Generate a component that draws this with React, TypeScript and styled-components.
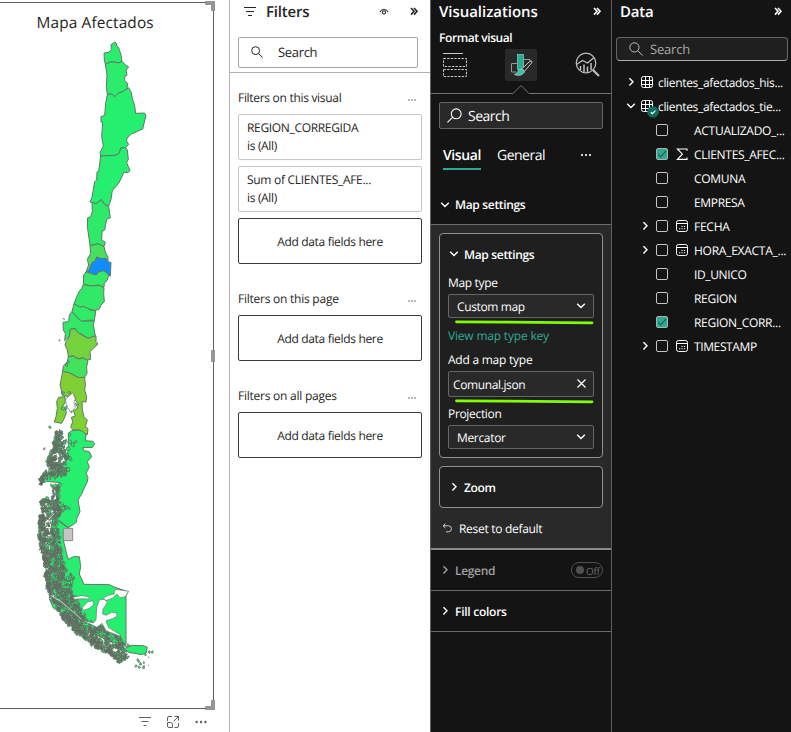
import React from "react";
import styled, { createGlobalStyle } from "styled-components";

const GlobalStyle = createGlobalStyle`
  * { box-sizing: border-box; }
  body {
    margin: 0;
    background: #fff;
    font-family: "Open Sans", "Noto Sans", sans-serif;
    font-size: 12px;
    text-rendering: geometricPrecision;
    overflow: hidden;
  }
  svg { display: block; flex: none; }
`;

/* ---------- shared ---------- */

const Page = styled.div`
  display: grid;
  grid-template-columns: 229px 201px 182px 179px;
  width: 791px;
  height: 732px;
`;

const Label = styled.span<{
  $size?: number;
  $weight?: number;
  $spacing?: number;
  $color?: string;
  $drop?: number;
}>`
  padding-top: ${(p) => (p.$drop ?? 0) * 2}px;
  font-size: ${(p) => p.$size ?? 12}px;
  font-weight: ${(p) => p.$weight ?? 400};
  letter-spacing: ${(p) => p.$spacing ?? -0.33}px;
  color: ${(p) => p.$color ?? "inherit"};
  line-height: 18px;
  white-space: nowrap;
`;

const PaneHeader = styled.header<{ $pad: string }>`
  display: flex;
  align-items: center;
  justify-content: space-between;
  height: 24px;
  padding: ${(p) => p.$pad};
`;

const HeaderGroup = styled.div<{ $gap: number }>`
  display: flex;
  align-items: center;
  gap: ${(p) => p.$gap}px;
`;

const Chevron = ({ dir, color = "#fff" }: { dir: "right" | "down"; color?: string }) => (
  <svg width="10" height="10" viewBox="0 0 10 10" fill="none" stroke={color} strokeWidth="1.4">
    <path d={dir === "right" ? "M3.4 1.2 L7 4.8 L3.4 8.4" : "M1.2 2.8 L5 6.6 L8.8 2.8"} />
  </svg>
);

const DoubleChevron = ({ color }: { color: string }) => (
  <svg width="9" height="10" viewBox="0 0 9 10" fill="none" stroke={color} strokeWidth="1.6">
    <path d="M1 1 L4 4.3 L1 7.6 M4 1 L7 4.3 L4 7.6" />
  </svg>
);

const Magnifier = ({ size, color, flip, weight = 1.15 }: { size: number; color: string; flip?: boolean; weight?: number }) => (
  <svg width={size} height={size} viewBox="0 0 14 14" fill="none" stroke={color} strokeWidth={weight}>
    <g transform={flip ? "translate(14 0) scale(-1 1)" : undefined}>
      <circle cx="5.4" cy="5.4" r="4.6" />
      <path d="M8.8 8.8 L13.6 13.4" />
    </g>
  </svg>
);

const Dots = ({ color, gap = 3.5, r = 0.8 }: { color: string; gap?: number; r?: number }) => (
  <svg width="12" height="4" viewBox="0 0 12 4" fill={color}>
    {[-1, 0, 1].map((i) => (
      <circle key={i} cx={6 + i * gap} cy="2" r={r} />
    ))}
  </svg>
);

/* ---------- map visual ---------- */

const Canvas = styled.section`
  display: flex;
  flex-direction: column;
  height: 732px;
`;

const VisualFrame = styled.div`
  position: relative;
  width: 214px;
  height: 707px;
  margin-top: 2px;
  border: solid #605e5c;
  border-width: 1px 1px 1px 0;
`;

const VisualTitle = styled.h2`
  position: absolute;
  top: 10px;
  left: 36.5px;
  margin: 0;
  font-size: 15.4px;
  font-weight: 400;
  line-height: 20px;
  letter-spacing: 0.14px;
  color: #252423;
  white-space: nowrap;
`;

const Handle = styled.i<{ $at: "top" | "middle" | "bottom" }>`
  position: absolute;
  right: -2px;
  width: ${(p) => (p.$at === "middle" ? 4 : 10)}px;
  height: ${(p) => (p.$at === "middle" ? 12 : 10)}px;
  ${(p) => p.$at === "top" && "top: -2px; border-top: 4px solid #979695; border-right: 4px solid #979695;"}
  ${(p) => p.$at === "bottom" && "bottom: -2px; border-bottom: 4px solid #979695; border-right: 4px solid #979695;"}
  ${(p) => p.$at === "middle" && "top: 347px; background: #979695;"}
`;

const VisualActions = styled.div`
  display: flex;
  align-items: center;
  height: 23px;
  padding: 3px 0 0 138px;
  gap: 15px;
`;

const GREEN = "#26ef70";
const LAGOS = "#80d035";

const north: [string, string][] = [
  ["345,126 349,130 350,138 356,143 359,152 363,165 366,184 355,189 345,186 331,186 316,193 313,180 312,159 326,157 334,149 333,134", "#2bed6f"],
  ["316,193 331,186 345,186 355,189 366,184 376,194 386,201 378,210 381,226 374,230 374,242 383,250 381,266 370,274 352,281 344,290 336,282 322,283 319,262 321,225", "#2bec6c"],
  ["322,283 336,282 344,290 352,281 370,274 386,263 394,278 397,295 404,318 407,340 433,339 438,346 428,387 394,402 381,414 380,424 386,433 377,443 362,444 358,460 345,466 302,468 300,458 310,438 305,410 308,368 303,366 303,350 314,346 317,310", GREEN],
  ["302,468 345,466 358,460 362,444 377,443 382,450 385,478 380,488 390,512 384,518 372,516 366,530 356,550 337,572 333,598 326,618 313,612 304,599 288,611 270,606 276,592 284,545 290,540 291,516 296,514", GREEN],
  ["276,607 288,611 304,599 313,612 326,620 331,653 320,658 314,690 306,695 305,720 316,727 312,740 294,731 270,737 267,715 262,680 263,653 272,650 277,635", "#2dea68"],
  ["270,737 294,731 312,740 316,756 324,772 324,785 302,776 290,771 286,783 276,788 268,812 258,816 266,795 262,778 272,760", "#47df5c"],
  ["290,771 302,776 318,775 325,786 333,787 331,829 320,818 310,812 296,816 288,825 272,819 260,816 268,808 276,788 286,784", "#118dff"],
  ["258,816 272,820 288,825 296,816 310,812 320,818 326,826 322,840 313,850 312,862 295,855 275,858 250,854 251,825", "#35e867"],
  ["250,854 275,858 298,856 312,864 311,880 313,905 303,915 297,928 284,932 265,926 240,922 222,911 230,890 237,875 245,865", "#32e867"],
  ["222,911 240,922 248,919 262,924 270,930 287,932 285,950 283,961 262,961 245,964 230,950 216,935", "#30ea68"],
  ["216,935 230,952 245,964 283,962 280,975 286,1008 265,1015 245,1002 230,998 226,985 211,988 208,1008 194,1022 196,1000 190,990 189,967 206,965 208,945", "#32e967"],
  ["211,988 222,986 240,1002 264,1015 278,1010 288,1008 288,1025 294,1032 280,1045 270,1055 272,1078 262,1080 248,1074 235,1076 220,1068 205,1070 202,1050 195,1035 198,1025 208,1010", "#74d23f"],
  ["205,1070 220,1068 235,1077 250,1074 264,1082 260,1100 261,1120 254,1132 235,1133 220,1124 205,1118 188,1114 190,1098 202,1085", "#43e25c"],
  ["188,1114 206,1118 220,1125 235,1133 254,1132 256,1155 254,1170 260,1190 258,1206 246,1205 247,1230 252,1250 262,1260 256,1280 264,1286 262,1304 250,1300 240,1290 220,1290 212,1282 218,1265 214,1252 226,1248 220,1232 232,1225 236,1210 226,1202 225,1190 214,1180 205,1190 186,1185 184,1170 180,1155 184,1135", LAGOS],
  ["176,1192 195,1190 196,1205 188,1220 200,1235 193,1255 185,1270 163,1266 168,1250 172,1225 170,1205", LAGOS],
];

const aysen =
  "205,1300 215,1292 235,1290 248,1294 258,1305 256,1322 278,1324 284,1330 278,1342 248,1343 252,1352 268,1355 275,1370 262,1385 268,1402 262,1412 258,1420 264,1432 262,1445 250,1470 246,1480 234,1500 240,1535 230,1555 230,1566 222,1572 205,1583 170,1560 175,1500 165,1462 180,1448 140,1444 125,1450 138,1425 170,1400 200,1380 205,1340";
const magallanes =
  "158,1555 175,1560 205,1583 190,1590 190,1620 200,1662 205,1678 220,1670 238,1670 242,1700 238,1722 252,1753 328,1754 345,1762 384,1775 378,1788 378,1935 330,1925 250,1885 205,1840 180,1815 152,1760 145,1690 155,1620";

const water = [
  "345,1768 386,1774 376,1790 360,1793 350,1782 338,1794 318,1802 310,1794 325,1786 342,1782",
  "298,1800 312,1798 322,1806 316,1818 309,1826 308,1842 318,1846 335,1837 350,1839 351,1848 338,1856 318,1862 325,1882 362,1905 358,1908 318,1892 306,1870 291,1882 262,1868 244,1860 280,1869 288,1860 290,1822",
  "218,1792 245,1787 268,1790 266,1797 244,1796 224,1798",
  "246,1824 262,1806 280,1802 280,1814 268,1825 252,1831",
  "205,1190 218,1178 226,1196 222,1208 226,1222 212,1236 202,1222 196,1200",
];

/* Extent of the western archipelago: y, left edge, right edge */
const band: [number, number, number][] = [
  [1292, 170, 188], [1315, 161, 194], [1345, 160, 194], [1370, 149, 205], [1400, 139, 205],
  [1425, 132, 200], [1440, 120, 145], [1455, 117, 128], [1456, 162, 180], [1498, 155, 180], [1499, 127, 172], [1520, 118, 200],
  [1560, 118, 170], [1615, 118, 180], [1660, 126, 186], [1700, 138, 194], [1735, 134, 222],
  [1770, 141, 218], [1800, 159, 234], [1830, 174, 246], [1860, 189, 264], [1885, 214, 314],
  [1910, 249, 360], [1935, 279, 378], [1955, 316, 386], [1975, 349, 394], [1985, 354, 370],
];

function seeded(seed: number) {
  let s = seed;
  return () => {
    s = (s * 1664525 + 1013904223) % 4294967296;
    return s / 4294967296;
  };
}

function buildIslands() {
  const rnd = seeded(17);
  const out: string[] = [];
  const blob = (cx: number, cy: number, r: number) => {
    const n = 7;
    const pts: string[] = [];
    for (let i = 0; i < n; i++) {
      const a = (i / n) * Math.PI * 2;
      const k = r * (0.3 + rnd() * 1.1);
      pts.push(`${(cx + Math.cos(a) * k).toFixed(1)},${(cy + Math.sin(a) * k * 1.2).toFixed(1)}`);
    }
    out.push(`M${pts.join("L")}Z`);
  };
  for (let i = 0; i < band.length - 1; i++) {
    const [y0, l0, r0] = band[i];
    const [y1, l1, r1] = band[i + 1];
    const count = Math.round(((y1 - y0) * (r0 - l0 + r1 - l1)) / 2 / 27);
    for (let k = 0; k < count; k++) {
      const t = rnd();
      const l = l0 + (l1 - l0) * t;
      const r = r0 + (r1 - r0) * t;
      blob(l + (r - l) * Math.pow(rnd(), 1.3), y0 + (y1 - y0) * t, 1.5 + Math.pow(rnd(), 2) * 6);
    }
  }
  // Eastern inlets, southern tail and single islets
  const scattered: [number, number, number][] = [
    [208, 1305, 5], [210, 1325, 6], [218, 1335, 5], [228, 1326, 5], [205, 1345, 5], [200, 1365, 5], [212, 1375, 5],
    [205, 1088, 4], [200, 1094, 4], [188, 1226, 5], [198, 1224, 5], [212, 1234, 4], [190, 1178, 4], [208, 1180, 4],
    [149, 1281, 4], [133, 1347, 3], [192, 957, 2], [179, 1021, 2], [230, 1212, 4],
    [385, 1938, 5], [448, 1958, 4], [458, 1956, 3], [436, 1964, 3],
    [415, 1982, 4], [422, 1992, 5], [430, 2000, 4], [408, 1998, 3], [418, 2001, 3], [432, 1988, 2], [446, 1972, 1], [446, 1996, 1],
    [310, 1880, 4], [300, 1895, 4], [325, 1900, 5], [340, 1905, 4], [335, 1920, 5], [350, 1912, 4],
    [212, 1725, 4], [222, 1735, 4], [232, 1802, 4], [236, 1832, 4], [240, 1848, 4], [255, 1842, 4],
    [188, 1515, 4], [200, 1522, 5], [208, 1526, 4],
  ];
  scattered.forEach(([x, y, r]) => blob(x, y, r));
  return out.join("");
}

const ChileMap = () => (
  <svg width="212" height="704" viewBox="0 9 636 2112">
    <g stroke="#5f7866" strokeWidth="3" strokeLinejoin="round">
      {north.map(([points, fill]) => (
        <polygon key={points} points={points} fill={fill} />
      ))}
      <polygon points={aysen} fill={GREEN} />
      <polygon points={magallanes} fill={GREEN} />
      <polygon points="382,1940 395,1936 430,1937 442,1942 438,1960 424,1964 405,1960 388,1958 374,1950" fill={GREEN} />
      <polygon points="148,1796 165,1812 195,1828 225,1842 240,1856 215,1850 185,1838 160,1824" fill={GREEN} />
      <path d={buildIslands()} fill={GREEN} stroke="#666b63" strokeWidth="2.4" />
      <g fill="#fff" strokeWidth="2">
        {water.map((points) => (
          <polygon key={points} points={points} />
        ))}
      </g>
      <path d="M152 1786 L185 1806 L215 1832 L245 1858" stroke="#fff" strokeWidth="2" fill="none" />
      <path d="M168 1559 L205 1583 M160 1500 L166 1570 L172 1610" fill="none" />
      <rect x="190" y="1585" width="28" height="37" fill="#c8c6c4" stroke="#8a8886" />
    </g>
  </svg>
);

/* ---------- filters ---------- */

const FiltersPane = styled.section`
  border-left: 1px solid #b3b3b3;
  background: #fff;
  color: #252423;
`;

const FilterSearchArea = styled.div`
  height: 49px;
  padding: 13px 0 0 8px;
  border-bottom: 1px solid #b3b0ad;
`;

const FilterSearch = styled.div`
  display: flex;
  align-items: center;
  gap: 15px;
  width: 180px;
  height: 31px;
  padding: 0 0 2px 12px;
  border: 1px solid #a6a6a6;
  border-radius: 2px;
`;

const FilterGroup = styled.div`
  display: flex;
  flex-direction: column;
  gap: 6px;
  width: 192px;
  padding-left: 8px;
`;

const GroupHeading = styled.div<{ $top: number }>`
  display: flex;
  align-items: center;
  justify-content: space-between;
  height: 18px;
  margin-top: ${(p) => p.$top}px;
  padding-right: 4px;
  margin-bottom: 1px;

  svg {
    margin-top: 4px;
  }
`;

const FilterCard = styled.div`
  display: flex;
  flex-direction: column;
  height: 46px;
  padding: 4px 8px;
  border: 1px solid #c8c6c4;
  border-radius: 2px;
`;

const DropZone = styled.div`
  display: flex;
  align-items: center;
  justify-content: center;
  height: 46px;
  padding-top: 2px;
  border: 1px solid #3b3a39;
  border-radius: 2px;
`;

/* ---------- visualizations ---------- */

const VizPane = styled.section`
  display: flex;
  flex-direction: column;
  background: #141414;
  border: solid #5e5e5e;
  border-width: 0 1px;
  color: #fff;
`;

const FormatTitle = styled.div`
  display: flex;
  align-items: center;
  height: 25px;
  padding: 2px 8px 0;
`;

const ModeBar = styled.div`
  display: flex;
  align-items: center;
  justify-content: space-between;
  height: 32px;
  padding: 0 11px 0 12px;
`;

const ModeTile = styled.div`
  display: grid;
  place-items: center;
  width: 32px;
  height: 32px;
  border-radius: 2px;
  background: #292929;
`;

const VizSearch = styled.div`
  display: flex;
  align-items: center;
  gap: 6px;
  height: 27px;
  margin: 8px 8px 0;
  padding-left: 7px;
  border: 1px solid #666;
  border-radius: 2px;
  background: #292929;
`;

const Tabs = styled.div`
  display: flex;
  align-items: flex-start;
  gap: 16px;
  height: 56px;
  padding: 16px 0 0 12px;
`;

const Tab = styled.div<{ $active?: boolean }>`
  height: 25px;
  padding-top: 2px;
  border-bottom: 2px solid ${(p) => (p.$active ? "#2cab93" : "transparent")};
`;

const TabMenu = styled.div`
  display: flex;
  justify-content: center;
  width: 56px;
  padding-top: 8px;
`;

const SectionRow = styled.div<{ $height: number; $muted?: boolean }>`
  display: flex;
  align-items: center;
  gap: 5px;
  height: ${(p) => p.$height}px;
  padding: 0 8px 0 9px;
  border-bottom: 1px solid #6b6b6b;
  color: ${(p) => (p.$muted ? "#a0a0a0" : "#fff")};
`;

const SectionBody = styled.div`
  display: flex;
  flex-direction: column;
  height: 325px;
  padding: 8px 8px 0;
  background: #292929;
  border-bottom: 2px solid #8a8a8a;
`;

const Card = styled.div<{ $height: number }>`
  display: flex;
  flex-direction: column;
  height: ${(p) => p.$height}px;
  margin-bottom: 8px;
  padding: 0 8px;
  border: 1px solid #8f8f8f;
  border-radius: 4px;
  background: #1f1f1f;
`;

const CardHeader = styled.div`
  display: flex;
  align-items: center;
  gap: 5px;
  height: 40px;
  padding-left: 1px;
`;

const Field = styled.div<{ $height: number; $padLeft: number }>`
  display: flex;
  align-items: center;
  justify-content: space-between;
  flex: none;
  height: ${(p) => p.$height}px;
  padding: 0 7px 0 ${(p) => p.$padLeft}px;
  border: 1px solid #666;
  border-radius: 2px;
  background: #292929;
`;

const FieldLabel = styled.div<{ $height: number; $bottom?: number }>`
  display: flex;
  align-items: center;
  height: ${(p) => p.$height}px;
  padding-bottom: ${(p) => p.$bottom ?? 0}px;
`;

const Underline = () => (
  <svg width="146" height="8" viewBox="0 0 146 8">
    <path d="M8.5 3.8 L60 4.2 L144 4.8" stroke="#80ff00" strokeWidth="2.8" strokeLinecap="round" />
  </svg>
);

const ResetRow = styled.div`
  display: flex;
  align-items: center;
  gap: 6px;
  height: 24px;
  padding-left: 3px;
`;

const Toggle = styled.div`
  display: flex;
  align-items: center;
  gap: 2px;
  width: 32px;
  height: 16px;
  margin-left: auto;
  padding-left: 4px;
  border: 1px solid #505050;
  border-radius: 8px;
`;

const Knob = styled.i`
  width: 8px;
  height: 8px;
  border-radius: 50%;
  background: #505050;
`;

/* ---------- data ---------- */

const DataPane = styled.section`
  background: #141414;
  color: #fff;
`;

const DataSearch = styled.div`
  display: flex;
  align-items: center;
  gap: 7px;
  width: 172px;
  height: 24px;
  margin: 13px 0 9px 4px;
  padding-left: 12px;
  border: 1px solid #666;
  border-bottom-color: #adadad;
  border-radius: 4px;
  background: #1f1f1f;
`;

const TableRow = styled.div`
  display: grid;
  grid-template-columns: 10px 12px 1fr;
  align-items: center;
  column-gap: 5px;
  height: 24px;
  padding-left: 14px;
`;

const FieldRow = styled.div`
  display: grid;
  grid-template-columns: 10px 12px 14px 1fr;
  align-items: center;
  column-gap: 6px;
  height: 24px;
  padding-left: 28px;
`;

const TypeSlot = styled.div`
  display: flex;
  justify-content: flex-end;
`;

const IconStack = styled.div`
  position: relative;
`;

const Badge = styled.div`
  position: absolute;
  left: 6px;
  top: 6px;
`;

const Checkbox = styled.div<{ $checked?: boolean }>`
  display: grid;
  place-items: center;
  width: 12px;
  height: 12px;
  border: 1px solid ${(p) => (p.$checked ? "#b0b0b0" : "#c4c4c4")};
  border-radius: 2px;
  background: ${(p) => (p.$checked ? "#2cab93" : "transparent")};
`;

const TableIcon = () => (
  <svg width="13" height="13" viewBox="0 0 13 13" fill="none" stroke="#fff">
    <rect x="0.5" y="0.5" width="11" height="11" rx="2" />
    <path d="M4.5 0.5 V11.5 M8.5 0.5 V11.5 M0.5 4.5 H11.5 M0.5 8.5 H11.5" />
  </svg>
);

const CalendarIcon = () => (
  <svg width="13" height="13" viewBox="0 0 13 13" fill="none" stroke="#fff">
    <rect x="1.5" y="0.5" width="11" height="11" rx="2" />
    <path d="M1.5 3.5 H12.5" />
    <path d="M6.4 6.5 H7.6 M8.9 6.5 H10.1 M4 8.7 H5.2 M6.4 8.7 H7.6 M8.9 8.7 H10.1" strokeWidth="1.1" />
  </svg>
);

const SigmaIcon = () => (
  <svg width="13" height="13" viewBox="0 0 13 13" fill="none" stroke="#fff" strokeWidth="1.1">
    <path d="M12 2.8 V1 H2.4 L7.4 6.2 L2.4 11.4 H12 V9.6" />
  </svg>
);

type FieldInfo = { name: string; spacing: number; checked?: boolean; icon?: "sum" | "date" };

const fields: FieldInfo[] = [
  { name: "ACTUALIZADO_...", spacing: -0.28 },
  { name: "CLIENTES_AFEC...", spacing: -0.31, checked: true, icon: "sum" },
  { name: "COMUNA", spacing: -0.3 },
  { name: "EMPRESA", spacing: -0.35 },
  { name: "FECHA", spacing: -0.25, icon: "date" },
  { name: "HORA_EXACTA_...", spacing: -0.26, icon: "date" },
  { name: "ID_UNICO", spacing: -0.36 },
  { name: "REGION", spacing: -0.3 },
  { name: "REGION_CORR...", spacing: -0.3, checked: true },
  { name: "TIMESTAMP", spacing: -0.38, icon: "date" },
];

export default function App() {
  return (
    <>
      <GlobalStyle />
      <Page>
        <Canvas>
          <VisualFrame>
            <ChileMap />
            <VisualTitle>Mapa Afectados</VisualTitle>
            <Handle $at="top" />
            <Handle $at="middle" />
            <Handle $at="bottom" />
          </VisualFrame>
          <VisualActions>
            <svg width="14" height="12" viewBox="0 0 14 12" stroke="#605e5c" strokeWidth="1">
              <path d="M1 1.5 H13 M3.5 5.5 H10.5 M5.5 9.5 H8.5" />
            </svg>
            <svg width="13" height="14" viewBox="1 0 13 14" fill="none" stroke="#605e5c" strokeWidth="1">
              <path d="M6 1.5 H3 Q1.5 1.5 1.5 3 V6 M1.5 7.5 H4.5 Q6.5 7.5 6.5 9.5 V12.5 H3 Q1.5 12.5 1.5 11 Z M8.5 12.5 H11 Q12.5 12.5 12.5 11 V8 M8.5 1.5 H12.5 V5.5 M12.5 1.5 L7.5 6.5" />
            </svg>
            <Dots color="#605e5c" gap={4.4} r={1.2} />
          </VisualActions>
        </Canvas>

        <FiltersPane>
          <PaneHeader $pad="0 11px 0 14px">
            <HeaderGroup $gap={10}>
              <svg width="12" height="12" viewBox="0 0 12 12" stroke="#252423" strokeWidth="1">
                <path d="M0 1.5 H12 M2 5.5 H10 M4 9.5 H8" />
              </svg>
              <Label $size={15} $weight={600} $spacing={-0.2}>
                Filters
              </Label>
            </HeaderGroup>
            <HeaderGroup $gap={21}>
              <svg width="10" height="9" viewBox="0 0 10 9" fill="none" stroke="#3b3a39" strokeWidth="1.1">
                <path d="M0.7 4.2 Q5 -1.8 9.3 4.2" />
                <circle cx="5" cy="4.5" r="1.6" />
              </svg>
              <DoubleChevron color="#252423" />
            </HeaderGroup>
          </PaneHeader>
          <FilterSearchArea>
            <FilterSearch>
              <Magnifier size={12} color="#252423" />
              <Label $size={13}>Search</Label>
            </FilterSearch>
          </FilterSearchArea>
          <FilterGroup>
            <GroupHeading $top={16}>
              <Label $spacing={-0.3}>Filters on this visual</Label>
              <Dots color="#605e5c" gap={3} />
            </GroupHeading>
            <FilterCard>
              <Label>REGION_CORREGIDA</Label>
              <Label>is (All)</Label>
            </FilterCard>
            <FilterCard>
              <Label $spacing={-0.29}>Sum of CLIENTES_AFE...</Label>
              <Label>is (All)</Label>
            </FilterCard>
            <DropZone>
              <Label>Add data fields here</Label>
            </DropZone>
            <GroupHeading $top={20}>
              <Label $spacing={-0.24}>Filters on this page</Label>
              <Dots color="#605e5c" gap={3} />
            </GroupHeading>
            <DropZone>
              <Label>Add data fields here</Label>
            </DropZone>
            <GroupHeading $top={20}>
              <Label $spacing={-0.24}>Filters on all pages</Label>
              <Dots color="#605e5c" gap={3} />
            </GroupHeading>
            <DropZone>
              <Label>Add data fields here</Label>
            </DropZone>
          </FilterGroup>
        </FiltersPane>

        <VizPane>
          <PaneHeader $pad="0 9px 0 8px">
            <Label $size={15} $weight={600} $spacing={-0.04}>
              Visualizations
            </Label>
            <DoubleChevron color="#fff" />
          </PaneHeader>
          <FormatTitle>
            <Label $weight={600} $spacing={-0.42}>
              Format visual
            </Label>
          </FormatTitle>
          <ModeBar>
            <svg width="24" height="26" viewBox="0 0 24 26" fill="none" stroke="#c8c8c8" strokeWidth="1">
              <path d="M0 1.5 H20" />
              <path d="M0.5 6.5 H23.5 V14.5 H0.5 Z M0.5 17.5 H23.5 V24.5 H0.5 Z" strokeDasharray="2.4 1.2" />
            </svg>
            <ModeTile>
              <svg width="24" height="24" viewBox="0 0 24 24" fill="none">
                <path d="M8 10.5 H2.5 V19 H7" stroke="#9a9a9a" />
                <path d="M15 6.5 H21 V9" stroke="#9a9a9a" />
                <rect x="8.5" y="1.5" width="6" height="15" fill="#2cab93" stroke="#6fc9b8" strokeWidth=".8" />
                <path d="M12.5 16 L21 8.2 Q24 7.4 22.6 10 L15.3 18.5 Z" fill="#292929" stroke="#c8c8c8" />
                <path d="M12.6 16 Q15.8 16.5 15.3 19.5 Q12 24 5.3 21.5 Q8.3 20.5 9.1 18 Q10.3 15.6 12.6 16 Z" fill="#35c4aa" stroke="#d0d0d0" strokeWidth=".6" />
              </svg>
            </ModeTile>
            <svg width="26" height="26" viewBox="0 0 26 26" fill="none" stroke="#c0c0c0">
              <circle cx="12" cy="11" r="9.8" strokeWidth="1.2" />
              <path d="M2.5 12.5 L8.5 8.5 L13.5 11 L20 5.5" strokeWidth="1.2" />
              <path d="M6.5 14 V18 M10 12.5 V20 M13.5 14.5 V20 M17 11 V18" strokeWidth="1.5" />
              <path d="M19 18 L25 24" strokeWidth="2.2" />
            </svg>
          </ModeBar>
          <svg width="180" height="13" viewBox="0 0 180 13" fill="none" stroke="#747474">
            <path d="M0 12.5 H82 L90 4.5 L98 12.5 H180" />
          </svg>
          <VizSearch>
            <Magnifier size={15} color="#fff" flip weight={1} />
            <Label $size={14} $spacing={-0.5} $drop={1}>
              Search
            </Label>
          </VizSearch>
          <Tabs>
            <Tab $active>
              <Label $size={14} $weight={600} $spacing={-0.4}>
                Visual
              </Label>
            </Tab>
            <Tab>
              <Label $size={14} $spacing={-0.5}>
                General
              </Label>
            </Tab>
            <TabMenu>
              <Dots color="#fff" gap={4} r={1.1} />
            </TabMenu>
          </Tabs>
          <SectionRow $height={40}>
            <Chevron dir="down" />
            <Label $weight={600}>Map settings</Label>
          </SectionRow>
          <SectionBody>
            <Card $height={225}>
              <CardHeader>
                <Chevron dir="down" />
                <Label $weight={600} $drop={1}>
                  Map settings
                </Label>
              </CardHeader>
              <FieldLabel $height={20} $bottom={2}>
                <Label>Map type</Label>
              </FieldLabel>
              <Field $height={24} $padLeft={8}>
                <Label $drop={1} $spacing={-0.38}>
                  Custom map
                </Label>
                <Chevron dir="down" />
              </Field>
              <Underline />
              <FieldLabel $height={20}>
                <Label $color="#2cab93" $spacing={-0.19}>
                  View map type key
                </Label>
              </FieldLabel>
              <FieldLabel $height={25}>
                <Label $spacing={-0.24} $drop={1}>
                  Add a map type
                </Label>
              </FieldLabel>
              <Field $height={26} $padLeft={4}>
                <Label $drop={1} $spacing={-0.38}>
                  Comunal.json
                </Label>
                <svg width="10" height="11" viewBox="0 0 10 11" stroke="#fff" strokeWidth="1.2">
                  <path d="M1.5 0.5 L9.5 8.5 M9.5 0.5 L1.5 8.5" />
                </svg>
              </Field>
              <Underline />
              <FieldLabel $height={20} $bottom={2}>
                <Label>Projection</Label>
              </FieldLabel>
              <Field $height={24} $padLeft={8}>
                <Label $drop={1}>Mercator</Label>
                <Chevron dir="down" />
              </Field>
            </Card>
            <Card $height={42}>
              <CardHeader>
                <Chevron dir="right" />
                <Label $weight={600} $drop={1}>
                  Zoom
                </Label>
              </CardHeader>
            </Card>
            <ResetRow>
              <svg width="11" height="10" viewBox="0 0 11 10" fill="none" stroke="#c8c8c8" strokeWidth="1">
                <path d="M3.5 0.7 L1 2.8 L3.5 5 M1 2.8 H6.5 Q9.5 3 9.5 5.8 Q9.3 8.8 6.5 8.8 H4" />
              </svg>
              <Label $drop={1} $spacing={-0.3}>
                Reset to default
              </Label>
            </ResetRow>
          </SectionBody>
          <SectionRow $height={41} $muted>
            <Chevron dir="right" color="#a0a0a0" />
            <Label $weight={600} $drop={1}>
              Legend
            </Label>
            <Toggle>
              <Knob />
              <Label $size={10} $color="#6a6a6a" $drop={0.5}>
                Off
              </Label>
            </Toggle>
          </SectionRow>
          <SectionRow $height={41}>
            <Chevron dir="right" />
            <Label $weight={600} $drop={1} $spacing={-0.26}>
              Fill colors
            </Label>
          </SectionRow>
        </VizPane>

        <DataPane>
          <PaneHeader $pad="0 8px 0 8px">
            <Label $size={15} $weight={600} $spacing={-0.2}>
              Data
            </Label>
            <DoubleChevron color="#fff" />
          </PaneHeader>
          <DataSearch>
            <Magnifier size={14} color="#c0c0c0" weight={1} />
            <Label $size={13} $color="#a8a8a8" $spacing={-0.2}>
              Search
            </Label>
          </DataSearch>
          <TableRow>
            <Chevron dir="right" />
            <TableIcon />
            <Label $drop={1}>clientes_afectados_his...</Label>
          </TableRow>
          <TableRow>
            <Chevron dir="down" />
            <IconStack>
              <TableIcon />
              <Badge>
                <svg width="12" height="12" viewBox="0 0 12 12">
                  <circle cx="6" cy="6" r="5.8" fill="#0f6c5c" />
                  <path d="M3.8 6.2 L5.4 7.6 L8.4 4.6" fill="none" stroke="#fff" strokeWidth="1.3" />
                </svg>
              </Badge>
            </IconStack>
            <Label $drop={1}>clientes_afectados_tie...</Label>
          </TableRow>
          {fields.map((f) => (
            <FieldRow key={f.name}>
              {f.icon === "date" ? <Chevron dir="right" /> : <span />}
              <Checkbox $checked={f.checked}>
                {f.checked && (
                  <svg width="10" height="10" viewBox="0 0 10 10" fill="none" stroke="#14594c" strokeWidth="1.1">
                    <path d="M1.5 5.5 L3.8 7.8 L8.8 2.2" />
                  </svg>
                )}
              </Checkbox>
              <TypeSlot>
                {f.icon === "date" && <CalendarIcon />}
                {f.icon === "sum" && <SigmaIcon />}
              </TypeSlot>
              <Label $spacing={f.spacing} $drop={0.5}>
                {f.name}
              </Label>
            </FieldRow>
          ))}
        </DataPane>
      </Page>
    </>
  );
}
